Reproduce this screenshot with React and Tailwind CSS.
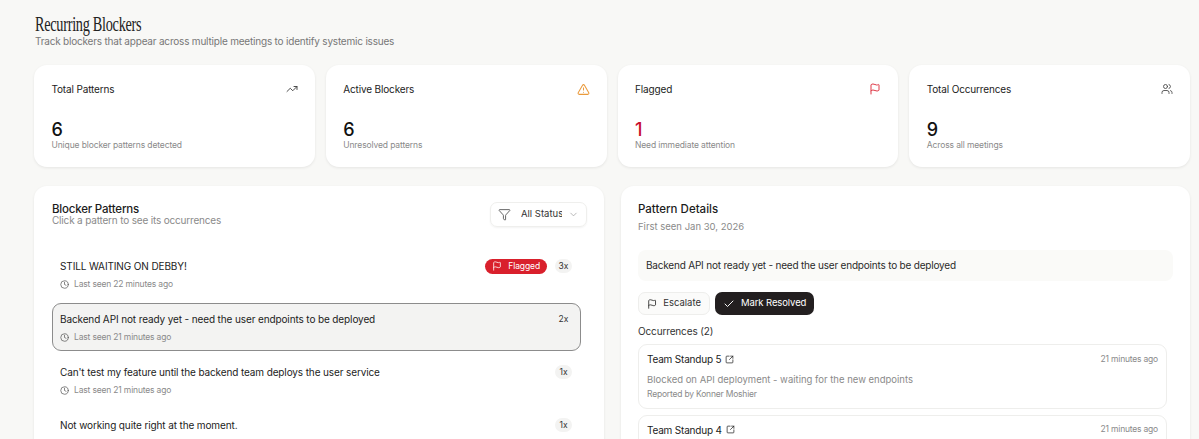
import React from "react";
import { TrendingUp, TriangleAlert, Flag, Users, Funnel, ChevronDown, Clock, SquareArrowOutUpRight, Check } from "lucide-react";

const sans = "font-['Inter','Noto_Sans',sans-serif]";

function Stat({ title, icon, value, sub, valueClass = "text-[#111111]" }) {
  return (
    <div className="flex h-[102px] flex-1 flex-col rounded-[13px] bg-white pl-[17.5px] pr-[17px] pt-[17px] shadow-[0_1px_3px_rgba(0,0,0,0.08)]">
      <div className="flex items-center justify-between">
        <span className="text-[10px] leading-[14px] tracking-[-0.15px] text-[#222222]">{title}</span>
        {icon}
      </div>
      <div className={`mt-[25px] text-[18px] leading-[18px] font-medium ${valueClass}`}>{value}</div>
      <div className="text-[8.5px] leading-[12px] tracking-[-0.12px] text-[#8a8a8a]">{sub}</div>
    </div>
  );
}

function Row({ title, time, count, flagged, selected }) {
  return (
    <div className={`h-[48px] rounded-[9px] border pl-[7px] pr-2 pt-[7px] ${selected ? "border-[#8c8c8c] bg-[#f3f3f2]" : "border-transparent"}`}>
      <div className="flex items-center justify-between">
        <span className="text-[10px] leading-[16px] tracking-[-0.12px] text-[#1c1c1c]">{title}</span>
        <div className="flex items-center gap-[8px]">
          {flagged && (
            <span className="flex h-[15px] items-center gap-[6px] rounded-full bg-[#d9202c] px-[7px] text-[8.5px] tracking-[-0.1px] text-white">
              <Flag size={10} strokeWidth={1.9} />
              Flagged
            </span>
          )}
          <span className={`flex h-[14px] w-[17px] items-center justify-center rounded-full text-[8.5px] text-[#333333] ${selected ? "" : "bg-[#f3f3f2]"}`}>{count}</span>
        </div>
      </div>
      <div className="mt-[4px] flex items-center gap-[5px] text-[8.5px] leading-[12px] tracking-[-0.17px] text-[#8a8a8a]">
        <Clock size={9} strokeWidth={1.9} className="text-[#555555]" />
        {time}
      </div>
    </div>
  );
}

function Occurrence({ name, quote, by }) {
  return (
    <div className="h-[65px] rounded-[9px] border border-[#eeeeec] px-2 pt-[6px]">
      <div className="flex items-center justify-between">
        <span className="flex items-center gap-[4px] text-[10px] leading-[16px] tracking-[-0.2px] text-[#1c1c1c]">
          {name}
          <SquareArrowOutUpRight size={9} strokeWidth={1.9} />
        </span>
        <span className="text-[8.5px] tracking-[-0.2px] text-[#8a8a8a]">21 minutes ago</span>
      </div>
      <div className="mt-[6px] text-[9.5px] leading-[14px] text-[#8a8a8a]">{quote}</div>
      <div className="mt-[1px] text-[8.5px] leading-[12px] tracking-[-0.2px] text-[#8a8a8a]">{by}</div>
    </div>
  );
}

export default function App() {
  return (
    <div className={`h-[439px] overflow-hidden bg-[#f8f8f6] pl-[34px] pr-[9px] pt-[14px] ${sans}`}>
      <h1 className="ml-px origin-left scale-x-[0.68] font-['Liberation_Serif',serif] text-[21px] leading-[20px] tracking-[-0.02em] whitespace-nowrap text-[#222222]">Recurring Blockers</h1>
      <p className="ml-px text-[10px] leading-[14px] tracking-[-0.2px] text-[#777777]">Track blockers that appear across multiple meetings to identify systemic issues</p>

      <div className="mt-[17px] flex gap-[11px]">
        <Stat title="Total Patterns" icon={<TrendingUp size={12} strokeWidth={1.9} className="text-[#444444]" />} value="6" sub="Unique blocker patterns detected" />
        <Stat title="Active Blockers" icon={<TriangleAlert size={13} strokeWidth={1.9} className="text-[#ea9a3c]" />} value="6" sub="Unresolved patterns" />
        <Stat title="Flagged" icon={<Flag size={12} strokeWidth={1.9} className="text-[#dc2f3e]" />} value="1" valueClass="text-[#c8102e]" sub="Need immediate attention" />
        <Stat title="Total Occurrences" icon={<Users size={12} strokeWidth={1.7} className="text-[#444444]" />} value="9" sub="Across all meetings" />
      </div>

      <div className="mt-[19px] flex gap-[17px]">
        <section className="h-[300px] w-[570px] shrink-0 rounded-[13px] bg-white pl-[18px] pr-[17px] pt-[16px] shadow-[0_1px_3px_rgba(0,0,0,0.08)]">
          <div className="flex items-start justify-between">
            <div>
              <h2 className="text-[11.5px] leading-[14px] tracking-[-0.2px] font-medium text-[#1c1c1c]">Blocker Patterns</h2>
              <p className="text-[10px] leading-[9px] tracking-[-0.18px] text-[#8a8a8a]">Click a pattern to see its occurrences</p>
            </div>
            <div className="flex h-[25px] w-[97px] items-center rounded-[7px] border border-[#efefed] pl-[7px] shadow-[0_1px_2px_rgba(0,0,0,0.05)]">
              <Funnel size={13} strokeWidth={1.5} className="text-[#444444]" />
              <span className="ml-[10px] w-[41px] overflow-hidden text-[9.5px] whitespace-nowrap text-[#333333]">All Status</span>
              <ChevronDown size={11} strokeWidth={1.5} className="ml-[6px] text-[#999999]" />
            </div>
          </div>
          <div className="mt-[23px] flex flex-col gap-[5px] pr-[6px]">
            <Row title="STILL WAITING ON DEBBY!" time="Last seen 22 minutes ago" count="3x" flagged />
            <Row title="Backend API not ready yet - need the user endpoints to be deployed" time="Last seen 21 minutes ago" count="2x" selected />
            <Row title="Can't test my feature until the backend team deploys the user service" time="Last seen 21 minutes ago" count="1x" />
            <Row title="Not working quite right at the moment." time="Last seen 21 minutes ago" count="1x" />
          </div>
        </section>

        <section className="h-[300px] flex-1 rounded-[13px] bg-white px-[17px] pt-[16px] shadow-[0_1px_3px_rgba(0,0,0,0.08)]">
          <h2 className="text-[11.5px] leading-[14px] font-medium text-[#1c1c1c]">Pattern Details</h2>
          <p className="mt-[4px] text-[9.5px] leading-[14px] text-[#8a8a8a]">First seen Jan 30, 2026</p>
          <div className="mt-[16px] flex h-[31px] items-center rounded-[8px] bg-[#fafaf8] px-2 text-[10px] tracking-[-0.2px] text-[#2a2a2a]">Backend API not ready yet - need the user endpoints to be deployed</div>
          <div className="mt-[11px] flex gap-[5px]">
            <button className="flex h-[23px] w-[72px] items-center gap-[6px] rounded-[7px] border border-[#eeeeec] bg-[#fbfbfa] px-[8px] text-[9.5px] text-[#333333]">
              <Flag size={12} strokeWidth={1.9} className="text-[#222222]" />
              Escalate
            </button>
            <button className="flex h-[23px] items-center gap-[6px] rounded-[7px] bg-[#231f20] px-[8px] text-[9.5px] tracking-[-0.1px] text-white">
              <Check size={12} strokeWidth={1.9} />
              Mark Resolved
            </button>
          </div>
          <h3 className="mt-[9px] text-[10px] leading-[14px] tracking-[-0.14px] text-[#333333]">Occurrences (2)</h3>
          <div className="mt-[6px] flex flex-col gap-[5.5px] pr-[6px]">
            <Occurrence name="Team Standup 5" quote="Blocked on API deployment - waiting for the new endpoints" by="Reported by Konner Moshier" />
            <Occurrence name="Team Standup 4" quote="" by="" />
          </div>
        </section>
      </div>
    </div>
  );
}
